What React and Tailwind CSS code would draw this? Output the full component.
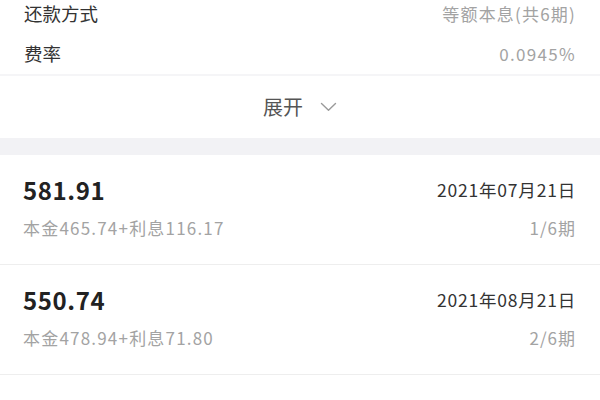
import React from "react";

const font = { fontFamily: '"Noto Sans CJK SC", "Noto Sans", sans-serif' };

const items = [
  { amount: "581.91", detail: "本金465.74+利息116.17", date: "2021年07月21日", period: "1/6期" },
  { amount: "550.74", detail: "本金478.94+利息71.80", date: "2021年08月21日", period: "2/6期" },
  { amount: "519.57", detail: "本金492.50+利息27.07", date: "2021年09月21日", period: "3/6期" },
];

export default function App() {
  return (
    <div className="w-[600px] h-[400px] overflow-hidden bg-white" style={font}>
      <div className="-mt-[6px]">
        <div className="h-[40px] flex items-center justify-between pl-[24px] pr-[24px]">
          <span className="text-[18.5px] text-[#333]">还款方式</span>
          <span className="text-[17px] tracking-[1.2px] text-[#a3a3a3]">等额本息(共6期)</span>
        </div>
        <div className="h-[40px] flex items-center justify-between pl-[24px] pr-[24px]">
          <span className="text-[18.5px] text-[#333]">费率</span>
          <span className="text-[17px] tracking-[1.3px] text-[#a3a3a3]">0.0945%</span>
        </div>
      </div>
      <div className="h-[2px] bg-[#f5f5f7]" />
      <div className="h-[62px] flex items-center justify-center gap-[17px]">
        <span className="text-[20px] text-[#555]">展开</span>
        <svg width="17" height="10" viewBox="0 0 17 10" fill="none">
          <path d="M1.5 1.5 L8.5 8.2 L15.5 1.5" stroke="#9a9a9a" strokeWidth="1.4" strokeLinecap="round" strokeLinejoin="round" />
        </svg>
      </div>
      <div className="h-[17px] bg-[#f2f2f5]" />
      {items.map((it) => (
        <div key={it.amount} className="h-[110px] border-b border-[#eeeeee] pl-[23px] pr-[24px] pt-[20px] flex justify-between">
          <div className="flex flex-col">
            <span className="text-[24px] leading-[30px] font-bold tracking-[0.6px] text-[#222]">{it.amount}</span>
            <span className="mt-[11px] text-[17px] leading-[24px] tracking-[1.2px] text-[#a3a3a3]">{it.detail}</span>
          </div>
          <div className="flex flex-col items-end">
            <span className="text-[17.5px] leading-[30px] tracking-[0.8px] text-[#333]">{it.date}</span>
            <span className="mt-[11px] text-[17px] leading-[24px] tracking-[1px] text-[#a3a3a3]">{it.period}</span>
          </div>
        </div>
      ))}
    </div>
  );
}
